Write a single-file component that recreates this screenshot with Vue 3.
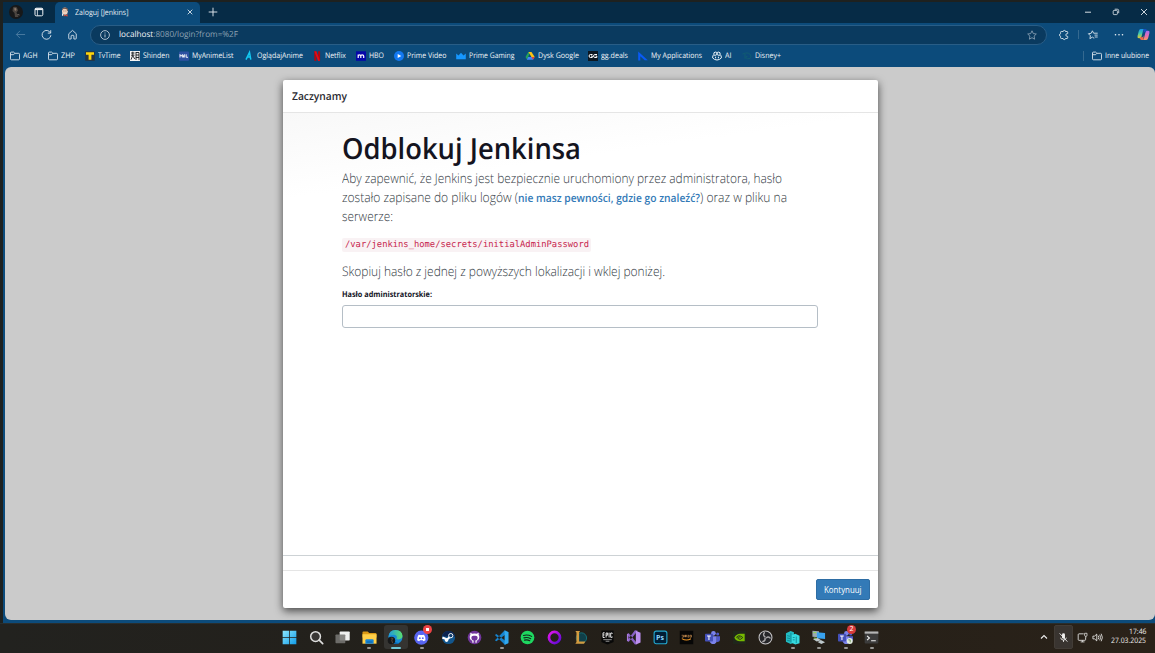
<script setup>
// Condenses or widens a label horizontally so it occupies exactly the given width in pixels.
const vFit = {
  mounted(el, { value }) {
    const w = el.getBoundingClientRect().width
    el.style.width = value + 'px'
    el.style.transform = `scaleX(${value / w})`
  }
}

const bookmarks = [
  { icon: 'folder', label: 'AGH', text: 14.5, slot: 38 },
  { icon: 'folder', label: 'ZHP', text: 14, slot: 37 },
  { icon: 'tvtime', label: 'TvTime', text: 22.5, slot: 45 },
  { icon: 'shinden', label: 'Shinden', text: 26.5, slot: 49 },
  { icon: 'mal', label: 'MyAnimeList', text: 41.5, slot: 64.5 },
  { icon: 'ogladaj', label: 'OglądajAnime', text: 46, slot: 68.5 },
  { icon: 'netflix', label: 'Netflix', text: 21, slot: 44 },
  { icon: 'hbo', label: 'HBO', text: 15, slot: 38 },
  { icon: 'pv', label: 'Prime Video', text: 39.5, slot: 61.5 },
  { icon: 'pg', label: 'Prime Gaming', text: 45.5, slot: 69 },
  { icon: 'drive', label: 'Dysk Google', text: 41, slot: 63 },
  { icon: 'gg', label: 'gg.deals', text: 27, slot: 50.5 },
  { icon: 'apps', label: 'My Applications', text: 51, slot: 74 },
  { icon: 'ai', label: 'AI', text: 6.5, slot: 30 },
  { icon: 'disney', label: 'Disney+', text: 26, slot: 40 }
]

const tasks = [
  { icon: 'start' }, { icon: 'search' }, { icon: 'view' },
  { icon: 'files', run: true }, { icon: 'edge', active: true },
  { icon: 'discord', run: true }, { icon: 'steam' }, { icon: 'github' },
  { icon: 'vscode', run: true }, { icon: 'spotify' }, { icon: 'ring' },
  { icon: 'lol' }, { icon: 'epic' }, { icon: 'vs' }, { icon: 'ps' },
  { icon: 'amazon' }, { icon: 'teams' }, { icon: 'nvidia' }, { icon: 'obs' },
  { icon: 'server', run: true }, { icon: 'putty', run: true },
  { icon: 'teams2', run: true }, { icon: 'term', run: true }
]
</script>

<template>
  <div class="desktop">
    <div class="window">
      <header class="titlebar">
        <svg class="avatar" viewBox="0 0 14 14"><circle cx="7" cy="7" r="7" fill="#171819"/><path d="M4 2.5q2-1.5 4 0l1 3-1.5 2 2 4.5H6L5.500 8 3.500 6z" fill="#4b4540"/><path d="M5 3.500l2-.5.5 2-1.500 1z" fill="#8e7a6b"/><path d="M8.500 9.500l2 .5" stroke="#8b8178" stroke-width=".8"/></svg>
        <svg class="wspace" viewBox="0 0 10 10"><rect x="1" y="1.200" width="7.800" height="7.600" rx="1.300" fill="none" stroke="#f1f4f6" stroke-width="1"/><path d="M1 2.200h7.800" stroke="#f1f4f6" stroke-width="1.800"/><path d="M3.400 3v5.500" stroke="#f1f4f6" stroke-width=".8"/></svg>
        <div class="tab">
          <svg class="butler" viewBox="0 0 10 10"><path d="M2 9.500Q2.500 7 5 7t3.500 2.500z" fill="#31485b"/><ellipse cx="4.900" cy="4.200" rx="2.900" ry="3.600" fill="#efd2bd"/><path d="M1.800 3.500Q2 .4 5 .4t3 3.400L7.200 4 6.500 2 3.500 1.700z" fill="#6d5046"/><path d="M4 7.500l1.500.8L7.500 7v2.500L5.500 8.700 4 9.300z" fill="#d24c40"/><path d="M2 5.500l1.500 2.700L2 9z" fill="#f7f5f2"/><path d="M3.500 4h.8M5.500 4h.8" stroke="#433" stroke-width=".6"/></svg>
          <div class="tabname"><span v-fit="53.5">Zaloguj [Jenkins]</span></div>
          <svg class="tabx" viewBox="0 0 6 6"><path d="M.7.7l4.600 4.600M5.300.7L.7 5.300" stroke="#e7edf2" stroke-width=".85"/></svg>
        </div>
        <svg class="plus" viewBox="0 0 10 10"><path d="M5 .7v8.600M.7 5h8.600" stroke="#dfe6ec" stroke-width=".95"/></svg>
        <div class="controls">
          <svg viewBox="0 0 8 8"><path d="M1 4.200h6" stroke="#eef2f5" stroke-width=".9"/></svg>
          <svg viewBox="0 0 8 8"><rect x="1.200" y="2.400" width="4.200" height="4.200" rx=".9" fill="none" stroke="#e8edf1" stroke-width=".8"/><path d="M2.700 1.200h2.600q1.400 0 1.400 1.400v2.600" fill="none" stroke="#e8edf1" stroke-width=".8"/></svg>
          <svg viewBox="0 0 8 8"><path d="M1 1l6 6M7 1L1 7" stroke="#eef2f5" stroke-width=".85"/></svg>
        </div>
      </header>

      <div class="toolbar">
        <svg class="nav back" viewBox="0 0 12 12"><path d="M11 6H1.500M5.500 2l-4 4 4 4" fill="none" stroke="#5482a5" stroke-width=".9"/></svg>
        <svg class="nav" viewBox="0 0 12 12"><path d="M10.300 4.200A4.800 4.800 0 1 0 10.800 6.700M10.600 1.300v3.200H7.400" fill="none" stroke="#dbe5ed" stroke-width="1"/></svg>
        <svg class="nav" viewBox="0 0 12 12"><path d="M1.900 5.200L6 1.500l4.100 3.700v5.100q0 .6-.6.6H7.500V7.600q0-.7-.7-.7H5.200q-.7 0-.7.7v3.300h-2q-.6 0-.6-.6z" fill="none" stroke="#d3dfe9" stroke-width="1" stroke-linejoin="round"/></svg>
        <div class="address">
          <svg class="info" viewBox="0 0 10 10"><circle cx="5" cy="5" r="4.400" fill="none" stroke="#c9d5df" stroke-width=".85"/><path d="M5 4.400v3M5 2.500v1" stroke="#c9d5df" stroke-width=".9"/></svg>
          <div class="url"><span v-fit="119"><b>localhost</b>:8080/login?from=%2F</span></div>
          <svg class="star" viewBox="0 0 10 10"><path d="M5 .8l1.300 2.800 3 .4-2.200 2.100.5 3.100L5 7.700 2.400 9.200l.5-3.100L.7 4l3-.4z" fill="none" stroke="#8ba2b5" stroke-width=".85" stroke-linejoin="round"/></svg>
        </div>
        <div class="actions">
          <svg viewBox="0 0 10 10"><path d="M8.700 3.600V2.200q0-.7-.7-.7H6.500q.1-1.100-1.100-1.100T4.200 1.500H2.300q-.7 0-.7.7v1.500Q.5 3.800.5 5t1.100 1.300v1.500q0 .7.7.7h1.800q.1 1.100 1.200 1.100t1.200-1.100H8q.7 0 .7-.7V6.400Q6.800 6.600 6.800 5t1.900-1.400z" fill="none" stroke="#d8e3eb" stroke-width=".9" stroke-linejoin="round"/></svg>
          <i class="bar"></i>
          <svg viewBox="0 0 10 10"><path d="M6.200 8.300L4.400 7.100 1.900 8.700l.5-2.900L.4 3.700l2.800-.4L4.400.8l1.200 2.400h4.100M6.500 5.100h3.200M6.700 7h3" fill="none" stroke="#d8e3eb" stroke-width=".9"/></svg>
          <svg viewBox="0 0 10 10"><path d="M1.500 4.800h.01M5 4.800h.01M8.500 4.800h.01" stroke="#edf2f6" stroke-width="1.600" stroke-linecap="round"/></svg>
          <svg class="copilot" viewBox="0 0 14 14"><defs><linearGradient id="ca" x1="0" y1="0" x2="0" y2="1"><stop offset="0" stop-color="#1692ec"/><stop offset=".5" stop-color="#43c9aa"/><stop offset="1" stop-color="#e9cb30"/></linearGradient><linearGradient id="cb" x1="0" y1="0" x2="0" y2="1"><stop offset="0" stop-color="#a66bf1"/><stop offset=".6" stop-color="#ee70a8"/><stop offset="1" stop-color="#f59b59"/></linearGradient></defs><path d="M4 1h4.500q-1.500 0-2 2L5 9q-.5 2-2 2H2Q0 11 .6 8.500l1.300-5Q2.500 1 4 1z" fill="url(#ca)"/><path d="M7 1h2q1.300 0 1.700 1.500l.5 1.500H9Q7.500 4 7 6z" fill="#194fbe"/><path d="M10 13H5.500q1.500 0 2-2L9 5q.5-2 2-2h1q2 0 1.400 2.500l-1.300 5Q11.500 13 10 13z" fill="url(#cb)"/><path d="M7 13H5q-1.300 0-1.700-1.500L3 10h2q1.500 0 2-2z" fill="#f16a4d"/></svg>
        </div>
      </div>

      <nav class="favs">
        <div v-for="b in bookmarks" :key="b.label" class="fav" :style="{ width: b.slot + 'px' }">
          <svg viewBox="0 0 10 10">
            <path v-if="b.icon === 'folder'" d="M.5 2q0-.9.900-.9h2.200L4.900 2.300h3.600q1 0 1 1v4.600q0 .9-1 .9H1.400q-.9 0-.9-.9zM.5 3.700h3.100L4.900 2.300" fill="none" stroke="#e6edf3" stroke-width=".85"/>
            <template v-else-if="b.icon === 'tvtime'"><rect x=".2" y=".3" width="9.600" height="9.600" fill="#273542"/><path d="M1 1.200h8v2.600H6.400v5H3.600v-5H1z" fill="#ffd50b"/></template>
            <template v-else-if="b.icon === 'shinden'"><rect width="10" height="10" fill="#f4f4f4"/><path d="M1 2h3.500M1 4.200h3.500M2.800.7v3.500L1 8.700M3 5l1.700 3M6 1v8M6 1.500h3v7.600M6 4h3M6 6.500h3" fill="none" stroke="#15191c" stroke-width=".9"/></template>
            <template v-else-if="b.icon === 'mal'"><rect y=".4" width="10" height="9.400" rx="1" fill="#2e51a2"/><path d="M1 6.500v-3l1.200 1.700 1.200-1.700v3M4.500 6.500v-2q0-.8 1.200-.8v2.800M7.200 3.300v3h1.800" fill="none" stroke="#fff" stroke-width=".9"/></template>
            <path v-else-if="b.icon === 'ogladaj'" d="M2 8.700L5.500 1.500 6.800 8.700M3.500 6h3" fill="none" stroke="#13c9f3" stroke-width="1.500"/>
            <template v-else-if="b.icon === 'netflix'"><path d="M2.300.3h2v9.600l-2-.2zM6.100.3h2v9.400l-2 .2z" fill="#b20710"/><path d="M2.300.3h2l3.800 9.400-2 .2z" fill="#e50914"/></template>
            <template v-else-if="b.icon === 'hbo'"><rect y=".3" width="10" height="9.500" fill="#0608a9"/><path d="M2.200 7V3.500M2.200 5q0-1.200 1.300-1.200T4.800 5v2M4.800 5q0-1.200 1.400-1.200T7.700 5v2" fill="none" stroke="#fff" stroke-width="1.200"/></template>
            <template v-else-if="b.icon === 'pv'"><circle cx="5" cy="5" r="5" fill="#1278f2"/><path d="M3.700 2.900L7.300 5 3.700 7.100z" fill="#fff"/></template>
            <path v-else-if="b.icon === 'pg'" d="M.2 2.600l2.300 1.800L5 1.700l2.500 2.700 2.300-1.800v5.600H.2z" fill="#1697ff"/>
            <template v-else-if="b.icon === 'drive'"><path d="M3.400 1h1.700l-3 7.700L.5 6z" fill="#23a35a"/><path d="M3.500.9h3L9.700 6H6.400z" fill="#fbc315"/><path d="M3.100 6h6.500L8 8.800H1.800z" fill="#4385f5"/><path d="M6.500 6h3.200L8 8.800z" fill="#e54235"/></template>
            <template v-else-if="b.icon === 'gg'"><rect width="10" height="10" fill="#0d1720"/><path d="M4.500 3.500H2.300q-1.200 0-1.200 1.500t1.200 1.500h2V5H3M9 3.500H6.800Q5.600 3.500 5.600 5t1.200 1.500h2V5H7.500" fill="none" stroke="#fff" stroke-width="1"/></template>
            <path v-else-if="b.icon === 'apps'" d="M.2.500L9.800 9.200H6.700L2.300 5.300v4.300H.2z" fill="#095af5"/>
            <g v-else-if="b.icon === 'ai'" fill="none" stroke="#eff6fb" stroke-width="1"><path d="M1.800 3.500Q1.500 1.100 3.300 1.100T5 2.100q0-1 1.700-1t1.500 2.400Q9.400 4.500 9.400 6.900 7.500 9 5 9T.6 6.900Q.6 4.500 1.800 3.500zM1.900 4.200h2q1.100 0 1.100-2.100 0 2.100 1.100 2.100h2M3.600 5.700v1.600M6.400 5.700v1.600"/></g>
            <path v-else d="M.5 3q7-3 8.500 2.200 0 3-3.500 2.600Q2 6 5.500 5.300M3 2.700v5.200" fill="none" stroke="#126070" stroke-width=".8"/>
          </svg>
          <span v-fit="b.text">{{ b.label }}</span>
        </div>
        <div class="other">
          <svg viewBox="0 0 10 10"><path d="M.5 2q0-.9.900-.9h2.200L4.900 2.300h3.600q1 0 1 1v4.600q0 .9-1 .9H1.400q-.9 0-.9-.9zM.5 3.700h3.100L4.900 2.300" fill="none" stroke="#e6edf3" stroke-width=".85"/></svg>
          <span v-fit="44">Inne ulubione</span>
        </div>
      </nav>

      <main class="page">
        <section class="dialog">
          <div class="dhead"><span v-fit="55">Zaczynamy</span></div>
          <div class="dbody">
            <h1><span v-fit="239">Odblokuj Jenkinsa</span></h1>
            <div class="lead">
              <div class="line"><span v-fit="440">Aby zapewnić, że Jenkins jest bezpiecznie uruchomiony przez administratora, hasło</span></div>
              <div class="line"><span v-fit="176">zostało zapisane do pliku logów (</span><a v-fit="182">nie masz pewności, gdzie go znaleźć?</a><span v-fit="87">) oraz w pliku na</span></div>
              <div class="line"><span v-fit="51">serwerze:</span></div>
            </div>
            <code><span v-fit="244">/var/jenkins_home/secrets/initialAdminPassword</span></code>
            <div class="lead copy"><span v-fit="323">Skopiuj hasło z jednej z powyższych lokalizacji i wklej poniżej.</span></div>
            <label for="pw"><span v-fit="90">Hasło administratorskie:</span></label>
            <input id="pw" type="password">
          </div>
          <div class="dgap"></div>
          <div class="dfoot"><button><span v-fit="37.5">Kontynuuj</span></button></div>
        </section>
      </main>
    </div>

    <footer class="taskbar">
      <div class="apps">
        <div v-for="t in tasks" :key="t.icon" class="app" :class="{ run: t.run, active: t.active }">
          <svg viewBox="0 0 16 16">
            <template v-if="t.icon === 'start'"><defs><linearGradient id="win" x1="0" y1="0" x2="1" y2="1"><stop stop-color="#8ce8ff"/><stop offset="1" stop-color="#109be8"/></linearGradient></defs><path d="M.7.700h6.900v6.900H.7zM8.400.700h6.900v6.900H8.400zM.7 8.400h6.900v6.900H.7zM8.400 8.400h6.900v6.900H8.400z" fill="url(#win)"/></template>
            <template v-else-if="t.icon === 'search'"><circle cx="7" cy="7" r="5.200" fill="#393735" stroke="#dededd" stroke-width="1.600"/><path d="M10.900 10.900l3.700 3.700" stroke="#dededd" stroke-width="1.800" stroke-linecap="round"/></template>
            <template v-else-if="t.icon === 'view'"><rect x="5" y="1.500" width="10.700" height="9.600" rx=".8" fill="#f0f0ef"/><rect x=".5" y="4.800" width="10.500" height="9.400" rx=".8" fill="#777674" opacity=".88"/></template>
            <template v-else-if="t.icon === 'files'"><path d="M.5 2.600Q.5 1.500 1.600 1.500h4.500l1.600 1.700h6.600q1.200 0 1.200 1.200V8H.5z" fill="#dc9a16"/><path d="M.5 4.500h15v10.100H.5z" fill="#ffcf49"/><path d="M3.600 14.700V11q0-1.200 1.200-1.200h6.400q1.200 0 1.200 1.200v3.700z" fill="#1683d7"/><path d="M5 12.800h6" stroke="#0961a5"/></template>
            <template v-else-if="t.icon === 'edge'"><defs><linearGradient id="edg"><stop stop-color="#1f98dc"/><stop offset="1" stop-color="#5bdf70"/></linearGradient></defs><circle cx="8" cy="7.500" r="7.500" fill="#168ad5"/><path d="M.5 7.500Q1 0 8 0t7.500 6.500Q15 10 11 10q-3 0-1.500-2 0-3-3.500-3-3 0-5.500 2.500z" fill="url(#edg)"/><path d="M5 8q0 5.500 7 6Q8 16.400 4 13z" fill="#0964ae"/><circle cx="3.700" cy="11.200" r="4" fill="#171819"/><path d="M3 8.500l2 .5-1 2 1 3" stroke="#504238" stroke-width="1.200" fill="none"/></template>
            <template v-else-if="t.icon === 'discord'"><circle cx="7.800" cy="8.200" r="7.600" fill="#5865f2"/><path d="M3.300 11q-.3-3.700 1.600-6l2 .2h1.800l2-.2q1.900 2.300 1.600 6l-2.200 1.100-.9-1.200H6.400l-.9 1.200z" fill="#fff"/><circle cx="6.200" cy="8.700" r="1" fill="#5865f2"/><circle cx="9.400" cy="8.700" r="1" fill="#5865f2"/></template>
            <template v-else-if="t.icon === 'steam'"><circle cx="8" cy="8" r="7" fill="#12558c"/><path d="M1.200 7Q2 1 8 1t7 6z" fill="#0c2450"/><path d="M1.500 8l5 2.200L10 7" stroke="#fff" stroke-width="2.200" fill="none"/><circle cx="10.400" cy="6" r="2.300" fill="#123d6b" stroke="#fff"/><circle cx="5.900" cy="11" r="1.700" fill="#fff"/></template>
            <template v-else-if="t.icon === 'github'"><circle cx="8" cy="8" r="7.300" fill="#70359b"/><path d="M5.700 13.500v-2.200Q2.800 10.700 2.900 7.200q0-1.200.7-2L3.500 3l2.200 1q2.300-.6 4.600 0l2.200-1-.1 2.200q.7.800.7 2 .1 3.500-2.800 4.100v2.200z" fill="#fff"/><path d="M7 14.500v-3.300Q4.600 11 4.600 8.300 4.600 6 7 6h2q2.400 0 2.400 2.300Q11.400 11 9 11.200v3.300z" fill="#70359b"/></template>
            <template v-else-if="t.icon === 'vscode'"><path d="M1 5.300l1.500-1L15.500 14l-4 1.700zM1 11l1.500 1L15.500 2.500 11.500.3z" fill="#1783ce"/><path d="M11.300.4l4.200 1.900v11.400l-4.200 1.900z" fill="#31a8ee"/></template>
            <template v-else-if="t.icon === 'spotify'"><circle cx="8" cy="8" r="7.300" fill="#1ed760"/><path d="M3.700 5.800q4.500-1.200 8.700 1M4.200 8.400q4-1 7.200.9M4.800 10.800q3.200-.8 5.600.7" fill="none" stroke="#13251a" stroke-width="1.200" stroke-linecap="round"/></template>
            <template v-else-if="t.icon === 'ring'"><defs><linearGradient id="rng" x2="1" y2="1"><stop stop-color="#e614ee"/><stop offset="1" stop-color="#570ad1"/></linearGradient></defs><circle cx="8" cy="8" r="5.900" fill="none" stroke="url(#rng)" stroke-width="2.900"/></template>
            <template v-else-if="t.icon === 'lol'"><circle cx="9" cy="8.500" r="5.500" fill="#103f49" stroke="#15717b"/><path d="M2.500 1h5l-1 1.700v9.500h6.700l-1.500 2.500H2.500l1.200-1.800V2.700z" fill="#d29b3f"/></template>
            <template v-else-if="t.icon === 'epic'"><path d="M1.500.5h13v12.200L8 15.500l-6.500-2.800z" fill="#080808"/><path d="M5 3H3.200v5H5M3.200 5.300h1.600M6.500 8V3.200h1.700v2.300H6.500M9.700 2.800V8M13 4V3.200h-1.600v4.600H13V7" fill="none" stroke="#fff" stroke-width=".95"/><path d="M3.500 10.300h9M6 12h4" stroke="#bbb" stroke-width=".8"/></template>
            <template v-else-if="t.icon === 'vs'"><path d="M1 4.500l2-1L12.500 15l-3 .5zM1 11.500l2 1 9.500-11.700-3-.5z" fill="#8861c4"/><path d="M10.500.8l5 2v10.400l-5 2.300z" fill="#bb8fee"/><path d="M1 4.500l1.600-1v9L1 11.500z" fill="#aa7adf"/></template>
            <template v-else-if="t.icon === 'ps'"><rect x="1.200" y="1.200" width="13.600" height="13.400" rx="2.200" fill="#001e36" stroke="#22a8d0" stroke-width="1.200"/><text x="3.300" y="11.100">Ps</text></template>
            <template v-else-if="t.icon === 'amazon'"><rect x=".8" y=".8" width="14.400" height="14.400" fill="#060606"/><path d="M2.800 5.600h2v2H3M6 7.600v-2h1v2-2h1.200v2M9.200 5.600h1.200l-1 2h1.300M11.600 5.600h1.700v2h-1.700z" fill="none" stroke="#d59757" stroke-width=".7"/><path d="M3 9.200q5 3 9.700.1" fill="none" stroke="#f19724" stroke-width="1.100"/></template>
            <template v-else-if="t.icon === 'teams' || t.icon === 'teams2'"><circle cx="9" cy="3.500" r="2.500" fill="#7b83eb"/><circle cx="13.500" cy="4.300" r="1.600" fill="#5059c9"/><path d="M5 6.700h7.500V12q-.7 3-3.700 3T5 12z" fill="#7b83eb"/><path d="M12.600 6.700H16v4q-.6 2.400-3.400 2z" fill="#5059c9"/><rect y="4" width="8.500" height="8.300" rx=".8" fill="#4450b8"/><path d="M2.200 6.300h4M4.200 6.300v4.300" stroke="#fff" stroke-width="1.100"/><g v-if="t.icon === 'teams2'"><circle cx="12.500" cy="11.800" r="3.200" fill="#e3eee0"/><path d="M11 10.500h2v2.700" stroke="#739661" fill="none"/></g></template>
            <template v-else-if="t.icon === 'nvidia'"><rect x="1" y="1" width="14" height="14" fill="#20261b"/><path d="M2.500 8Q5 4 8.500 4h5v8h-5Q4 12 2.500 8z" fill="#76b900"/><path d="M4.500 8Q7 5 9.500 6.600L11.500 8 9 10Q6.500 10 6 8.200 8 6.500 9 8" fill="none" stroke="#20261b" stroke-width=".9"/></template>
            <template v-else-if="t.icon === 'obs'"><circle cx="8" cy="8" r="6.900" fill="#262629" stroke="#c5c4c6" stroke-width="1.100"/><path d="M6.800 3q-2 2.400.6 4.300M12.900 8.500Q10.800 6.500 8.900 8.400M5.200 12.300q2.900-.8 2.300-3.400" fill="none" stroke="#aaa8aa" stroke-width="1.500" stroke-linecap="round"/></template>
            <template v-else-if="t.icon === 'server'"><path d="M1 3.500l5-2.500 3.500 1.500v11L6 15 1 12.500z" fill="#23bdc4"/><path d="M7 5.500L11 4l4.500 2v8L11 15.500 7 13.500z" fill="#35dae0"/><path d="M2.300 6l3 .7M2.300 8.500l3 .7M2.300 11l3 .7M8.300 8h2M8.300 10.500h2M12 7v7M6.300 3v10" stroke="#087c8a" stroke-width=".8"/></template>
            <template v-else-if="t.icon === 'putty'"><path d="M1.500.7l7 .5v6.500l-7-.5z" fill="#9caab0"/><path d="M6.300 2.500l8.700.8v6.200l-8.700-.6z" fill="#38a1ed"/><path d="M2 9.500l5-1 4 2.500-5 1.300zM7 12.800l4-2 4 2.200-4 1.900z" fill="#bdc8cb"/><path d="M2.500 2.600l3 .2M3 8.500l3 .3" stroke="#8fd35a" stroke-width="1.200"/></template>
            <template v-else><rect x=".7" y="1.600" width="14.600" height="12.700" rx="1" fill="#3c3c3c"/><path d="M.7 1.600h14.600v2.300H.7z" fill="#b5b5b5"/><path d="M3.300 6.200l2.500 2.300-2.500 2.300M7.600 11.500h5" fill="none" stroke="#f0f0f0" stroke-width="1.200"/></template>
          </svg>
          <em v-if="t.icon === 'discord'" class="badge dot"></em>
          <em v-if="t.icon === 'teams2'" class="badge">2</em>
        </div>
      </div>
      <div class="tray">
        <svg class="chev" viewBox="0 0 8 8"><path d="M1 5.500l3-3 3 3" fill="none" stroke="#ededec" stroke-width="1.100"/></svg>
        <div class="mic"><svg viewBox="0 0 12 12"><rect x="4.400" y="1.300" width="3.200" height="6" rx="1.600" fill="#f1f0ef"/><path d="M2.900 6.200q.4 2.600 3.100 2.600t3.100-2.600M6 8.800v2M1.800 1.500l8.400 9" fill="none" stroke="#f1f0ef" stroke-width="1"/></svg></div>
        <svg class="net" viewBox="0 0 12 12"><path d="M7.300 2H2.200q-.9 0-.9.9v5.300q0 .9.900.9h6.300q.9 0 .9-.9V6M4 10.800h4.200M6 9.200v1.500" fill="none" stroke="#f1f0ef" stroke-width=".9"/><path d="M8.300 1.400h2.600v2.300q0 1.100-1.300 1.100T8.300 3.700zM9.600 4.800v1.500" fill="none" stroke="#f1f0ef" stroke-width=".8"/></svg>
        <svg class="vol" viewBox="0 0 12 12"><path d="M1 4.500h1.800l2.400-2.200v7.400L2.800 7.500H1zM6.800 4q1.300 2 0 4M8.400 2.900q2 3.100 0 6.200M10 1.900q2.700 4.100 0 8.200" fill="none" stroke="#f1f0ef" stroke-width=".9"/></svg>
        <div class="clock"><span v-fit="17.5">17:46</span><span v-fit="35">27.03.2025</span></div>
      </div>
    </footer>
  </div>
</template>

<style>
body { margin: 0; overflow: hidden; background: #1f211e; }
</style>

<style scoped>
* { box-sizing: border-box; }
.desktop { width: 1155px; height: 653px; display: flex; flex-direction: column; background: #1e211f; font-family: "Open Sans", "Noto Sans", sans-serif; text-rendering: geometricPrecision; overflow: hidden; padding-top: 2px; }
svg { display: block; flex: none; overflow: visible; }
span, a { display: inline-block; flex: none; white-space: pre; transform-origin: 0 50%; }
.window { height: 621px; margin-left: 3px; background: #0c4b7b; display: flex; flex-direction: column; flex: none; }
.titlebar { height: 20.5px; background: #062b46; display: flex; align-items: center; flex: none; }
.avatar { width: 14px; height: 14px; margin-left: 6px; }
.wspace { width: 10px; height: 10px; margin-left: 11px; }
.tab { width: 145px; height: 21px; margin-left: 11px; border-radius: 5px 5px 0 0; background: #0c4b7b; display: flex; align-items: center; padding: 0 7px 0 5px; }
.butler { width: 10px; height: 10px; }
.tabname { display: flex; margin-left: 5px; font-size: 7.700px; color: #e7edf2; line-height: 10px; padding-top: 1px; flex: 1; }
.tabx { width: 6px; height: 6px; }
.plus { width: 10px; height: 10px; margin-left: 8px; }
.controls { display: flex; gap: 19.700px; margin-left: auto; margin-right: 7.500px; }
.controls svg { width: 8px; height: 8px; }
.toolbar { height: 24px; display: flex; align-items: center; padding-left: 11.500px; flex: none; }
.nav { width: 11px; height: 11px; margin-right: 15.300px; }
.address { width: 957px; height: 20px; margin-left: -3.500px; border: 1px solid #295d86; border-radius: 10px; background: #0a3a5f; display: flex; align-items: center; padding: 0 9px; flex: none; }
.info { width: 10px; height: 10px; }
.url { display: flex; font-size: 8.300px; color: #8fa3b3; margin-left: 9px; line-height: 11px; flex: 1; }
.url b { color: #f4f7f9; font-weight: 500; }
.star { width: 10px; height: 10px; }
.actions { display: flex; align-items: center; margin-left: 12.500px; }
.actions svg { width: 10px; height: 10px; }
.bar { width: 1px; height: 9px; background: #356990; margin: 0 9px 0 9px; }
.actions svg:nth-of-type(3) { margin-left: 16px; }
.actions .copilot { width: 13px; height: 13px; margin-left: 13px; }
.favs { height: 19.500px; display: flex; align-items: center; padding: 0 6px 0 7px; font-size: 7.700px; color: #f0f4f7; line-height: 10px; flex: none; }
.fav { display: flex; align-items: center; gap: 3.200px; flex: none; }
.fav svg, .other svg { width: 10px; height: 10px; }
.other { display: flex; align-items: center; gap: 3.500px; margin-left: auto; border-left: 1px solid #356990; padding-left: 8px; }
.page { width: 1150px; height: 553px; margin: 1px 0 0 2px; border-radius: 6px; background: #cbcbcb; flex: none; padding: 13px 0 0 278px; overflow: hidden; }
.dialog { width: 595px; height: 528px; border-radius: 2px; background: #fff; box-shadow: 0 3px 9px rgba(0, 0, 0, .65); display: flex; flex-direction: column; overflow: visible; }
.dhead { height: 33px; border-bottom: 1px solid #e5e5e5; padding: 1px 9px 0; display: flex; align-items: center; font-size: 10.800px; font-weight: 600; color: #29292f; flex: none; }
.dbody { height: 443px; padding: 18px 59px 0; border-bottom: 1px solid #cdd2d5; background: linear-gradient(172deg, #f8f8f8 0, #fff 85px); display: flex; flex-direction: column; align-items: flex-start; flex: none; }
h1 { display: flex; margin: 0; font-size: 29px; line-height: 36px; font-weight: 600; color: #14141f; }
.lead { display: flex; flex-direction: column; margin: 2px 0 0; font-size: 13.200px; font-weight: 300; line-height: 19px; color: #343b44; }
.line { display: flex; align-items: baseline; height: 19px; }
a { color: #337ab7; font-size: 11.300px; font-weight: 600; line-height: 15px; }
code { display: flex; margin-top: 12px; height: 14px; padding: 0 2px 0 3px; border-radius: 2px; background: #f9f2f4; color: #c7254e; font: 9px/14px "DejaVu Sans Mono", monospace; }
.copy { margin-top: 10px; }
label { display: flex; margin-top: 9px; font-size: 7.900px; font-weight: 700; color: #14141f; line-height: 11px; }
input { width: 476px; height: 23px; margin-top: 4px; border: 1px solid #b5bec6; border-radius: 3px; background: #fff; outline: none; }
.dgap { height: 15px; border-bottom: 1px solid #e5e5e5; flex: none; }
.dfoot { flex: 1; display: flex; justify-content: flex-end; align-items: center; padding-right: 8px; }
button { display: flex; align-items: center; justify-content: center; width: 54px; height: 21px; padding: 0; border: 1px solid #2e6da4; border-radius: 2px; background: #337ab7; color: #fff; font: 8.300px/11px "Open Sans", sans-serif; }
.taskbar { flex: 1; background: linear-gradient(90deg, #22221f, #241f18 60%, #2a2219); display: flex; align-items: stretch; border-top: 1px solid #292e2e; }
.apps { display: flex; padding-left: 276.500px; }
.app { width: 26.460px; display: flex; align-items: center; justify-content: center; position: relative; padding-bottom: 3px; }
.app svg { width: 15px; height: 15px; position: relative; }
.app text { font: 700 7.500px "Open Sans", sans-serif; fill: #8ed7ff; }
.active::before { content: ""; position: absolute; left: 1.500px; top: 1px; width: 24px; height: 24px; border-radius: 3px; background: #353431; }
.run::after, .active::after { content: ""; position: absolute; left: 11.500px; top: 23px; width: 4px; height: 2px; border-radius: 1px; background: #989794; }
.active::after { left: 8.500px; width: 10px; background: #70c7d6; }
.badge { position: absolute; left: 15px; top: 1px; width: 9px; height: 9px; border-radius: 50%; background: #d83b3b; color: #fff; font: 7px/9px "Open Sans", sans-serif; text-align: center; }
.dot { left: 14.500px; background: radial-gradient(circle, #fff 0 1.400px, #ed4245 2px); }
.tray { display: flex; align-items: center; margin-left: auto; padding: 0 9px 3px 0; }
.chev { width: 8px; height: 8px; margin-right: 6px; }
.mic { width: 19px; height: 24px; border-radius: 2px; background: #393430; border: 1px solid #423c36; display: flex; align-items: center; justify-content: center; }
.mic svg, .net, .vol { width: 11px; height: 11px; }
.net { margin-left: 4px; }
.vol { margin-left: 3.500px; }
.clock { margin-left: 8.500px; display: flex; flex-direction: column; align-items: flex-end; font-size: 7.500px; line-height: 9.500px; color: #f2f1f0; width: 35px; }
</style>
